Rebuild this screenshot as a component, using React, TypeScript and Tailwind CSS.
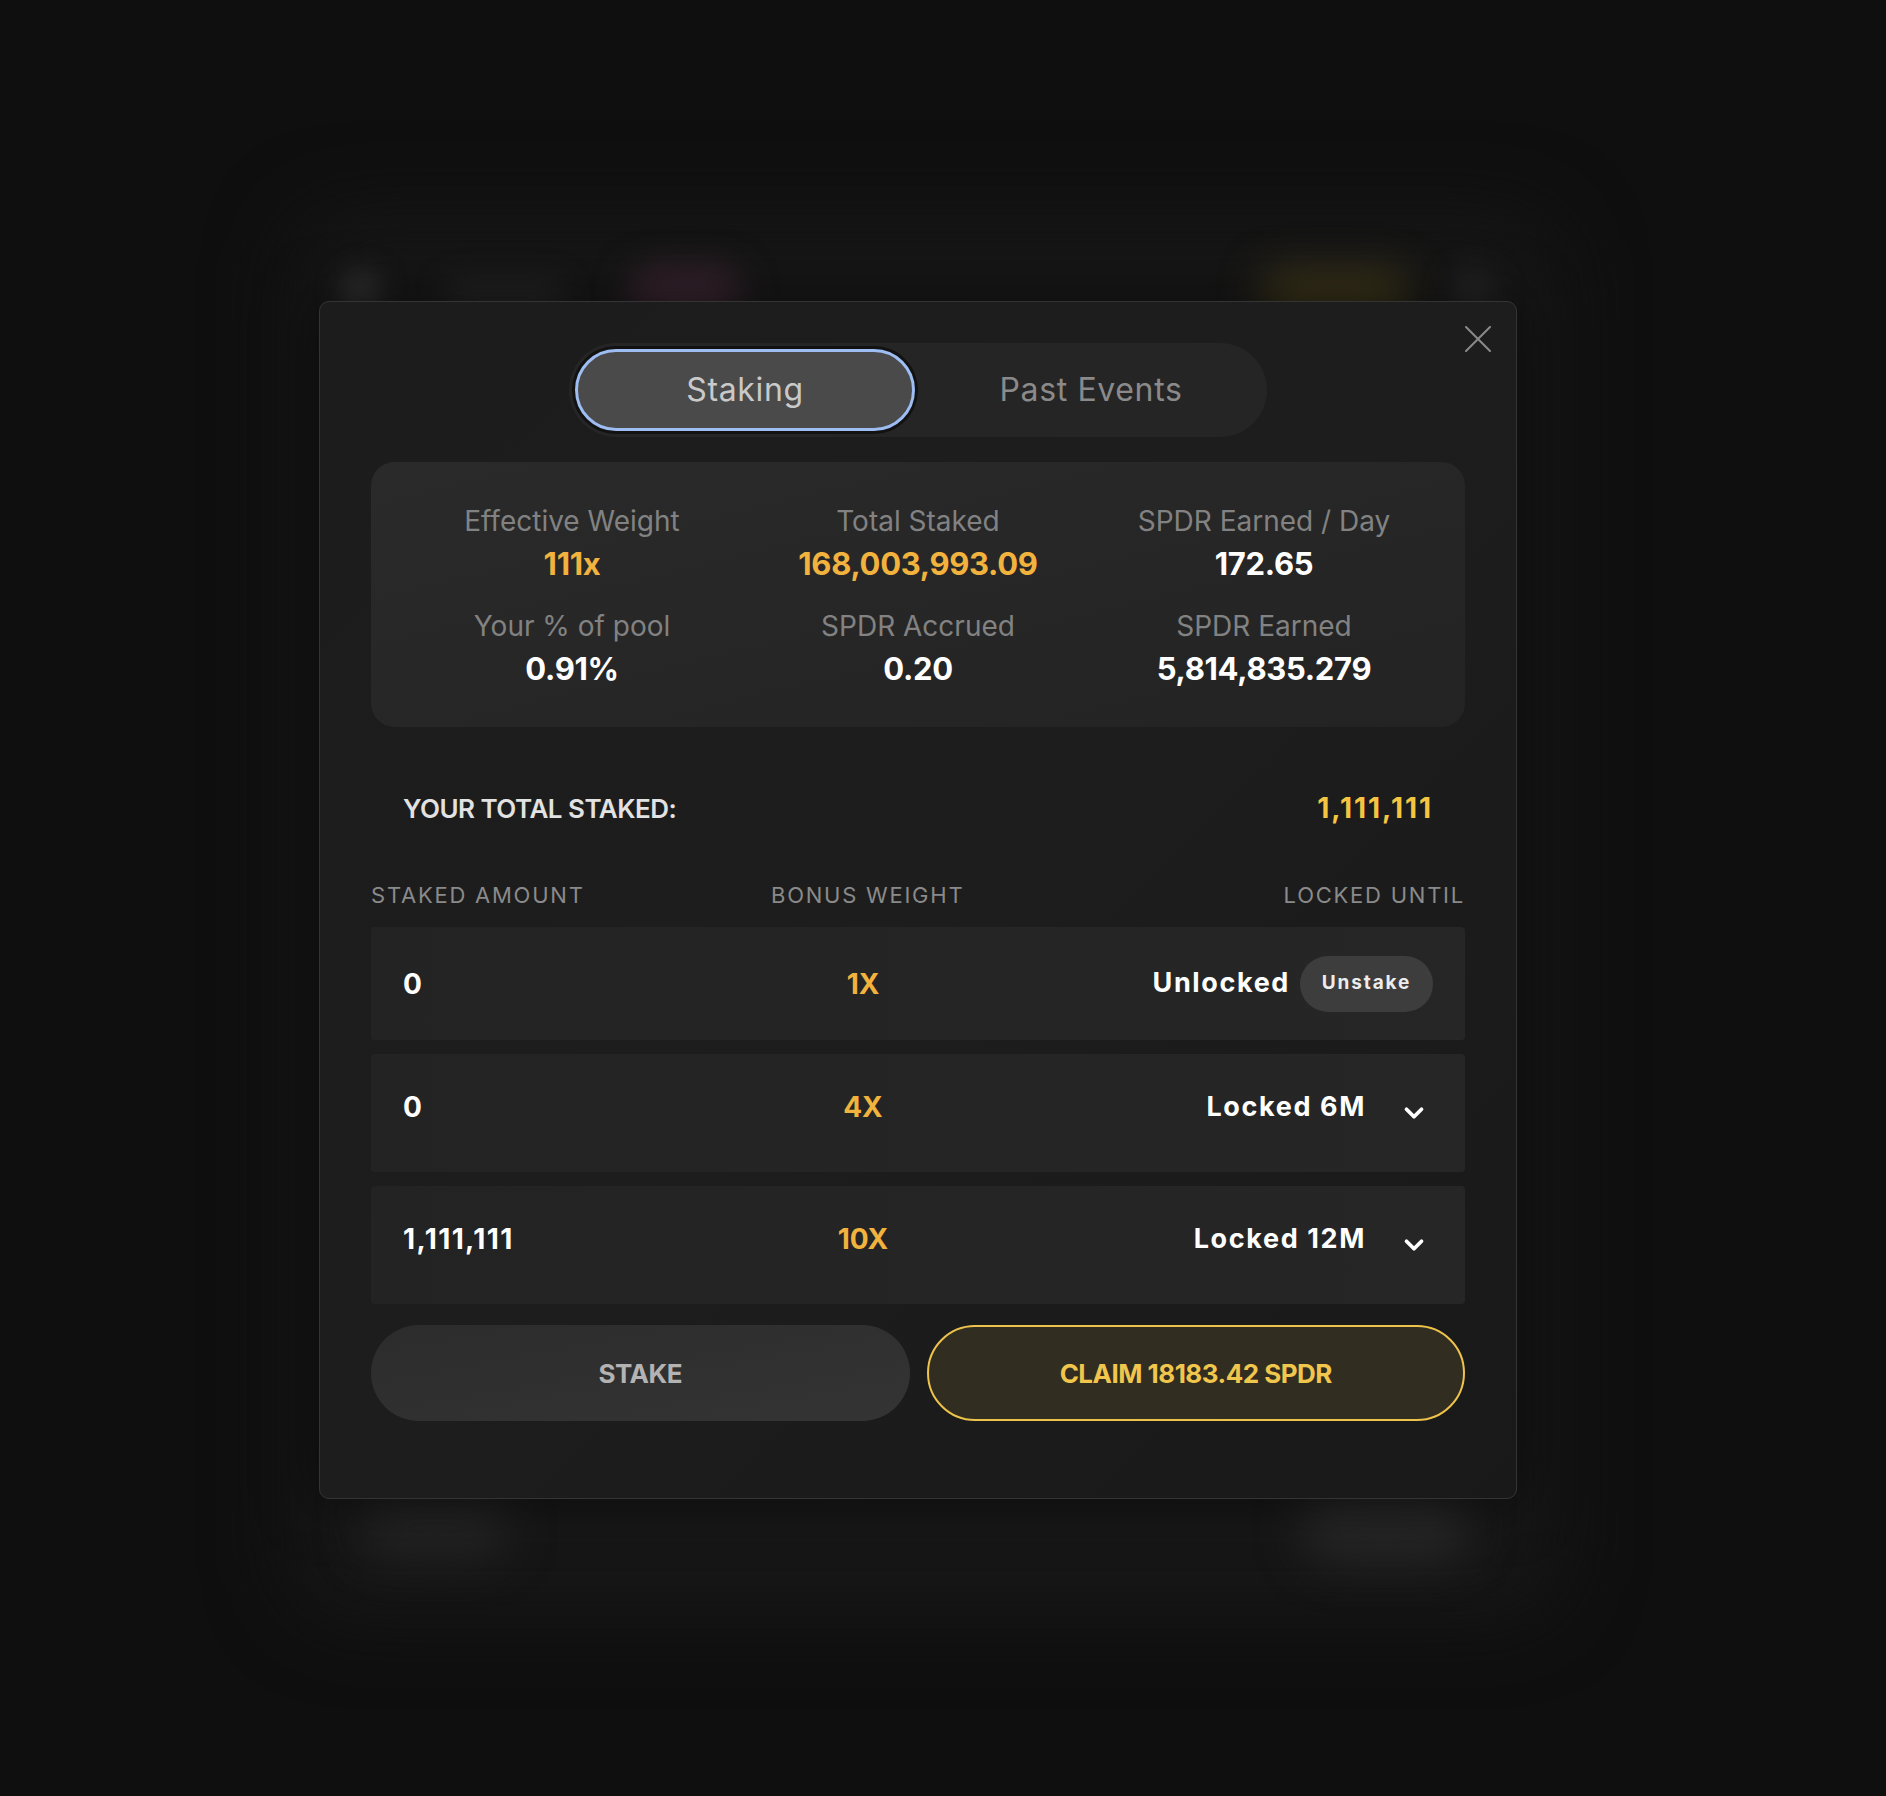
import { ChevronDown } from 'lucide-react'

const font = { fontFamily: 'Inter, "Noto Sans", sans-serif' }

const stats = [
  { label: 'Effective Weight', value: '111x', accent: true },
  { label: 'Total Staked', value: '168,003,993.09', accent: true },
  { label: 'SPDR Earned / Day', value: '172.65', accent: false },
  { label: 'Your % of pool', value: '0.91%', accent: false },
  { label: 'SPDR Accrued', value: '0.20', accent: false },
  { label: 'SPDR Earned', value: '5,814,835.279', accent: false },
]

const stakes = [
  { amount: '0', weight: '1X', status: 'Unlocked', unlocked: true },
  { amount: '0', weight: '4X', status: 'Locked 6M', unlocked: false },
  { amount: '1,111,111', weight: '10X', status: 'Locked 12M', unlocked: false },
]

function CloseIcon() {
  return (
    <svg width="26" height="26" viewBox="0 0 26 26" fill="none" stroke="#8a8a8a" strokeWidth="2" strokeLinecap="round">
      <path d="M1 1L25 25M25 1L1 25" />
    </svg>
  )
}

export default function App() {
  return (
    <div className="relative min-h-[1796px] w-full overflow-hidden bg-[#0f0f0f]" style={font}>
      {/* blurred page behind the modal */}
      <div className="absolute left-[290px] top-[215px] h-[1400px] w-[1270px] rounded-[60px] bg-[#171717] blur-[40px]" />
      <div className="absolute left-[340px] top-[270px] h-[42px] w-[42px] rounded-full bg-[#2c2c2c] blur-[12px]" />
      <div className="absolute left-[445px] top-[280px] h-[34px] w-[120px] rounded-full bg-[#222] blur-[14px]" />
      <div className="absolute left-[630px] top-[270px] h-[46px] w-[110px] rounded-full bg-[#3a2430] blur-[18px]" />
      <div className="absolute left-[1260px] top-[270px] h-[50px] w-[150px] rounded-full bg-[#3a3318] blur-[20px]" />
      <div className="absolute left-[1450px] top-[270px] h-[46px] w-[46px] rounded-full bg-[#242424] blur-[14px]" />
      <div className="absolute left-[360px] top-[1498px] h-[60px] w-[150px] rounded-full bg-[#232323] blur-[22px]" />
      <div className="absolute left-[1300px] top-[1493px] h-[70px] w-[170px] rounded-full bg-[#262626] blur-[22px]" />

      <div className="relative pl-[319px] pt-[301px]">
        <div className="relative w-[1198px] rounded-[10px] border border-[#343434] bg-gradient-to-br from-[#1c1c1c] via-[#1d1d1d] to-[#191919] px-[51px] pb-[77px] pt-[41px] shadow-[0_0_60px_rgba(0,0,0,0.5)]">
          <button className="absolute right-[25px] top-[24px]">
            <CloseIcon />
          </button>

          {/* tabs */}
          <div className="mx-auto flex h-[94px] w-[698px] gap-[6px] rounded-full bg-[#252525] p-[6px]">
            <div className="flex w-[340px] items-center justify-center rounded-full border-[3px] border-[#9dbdf3] bg-[#4a4a4a] text-[32px] tracking-[0.02em] text-[#c9c9c9] shadow-[0_0_0_3px_#121212]">
              Staking
            </div>
            <div className="flex w-[340px] items-center justify-center rounded-full text-[32px] tracking-[0.02em] text-[#8a8a8a]">
              Past Events
            </div>
          </div>

          {/* stats */}
          <div className="mt-[25px] grid h-[265px] grid-cols-3 gap-y-[27px] rounded-[24px] bg-gradient-to-br from-[#2a2a2a] to-[#232323] px-[28px] pb-[40px] pt-[43px]">
            {stats.map((s) => (
              <div key={s.label} className="flex flex-col items-center gap-[9px]">
                <div className="text-[28px] leading-[32px] text-[#828282]">{s.label}</div>
                <div
                  className={`text-[31px] font-bold leading-[36px] tracking-[-0.01em] ${
                    s.accent ? 'text-[#f2b23e]' : 'text-white'
                  }`}
                >
                  {s.value}
                </div>
              </div>
            ))}
          </div>

          {/* total */}
          <div className="mt-[56px] flex h-[50px] items-center justify-between px-[32px]">
            <span className="text-[26px] font-semibold tracking-[-0.02em] text-[#e2e2e2]">YOUR TOTAL STAKED:</span>
            <span className="text-[28px] font-bold tracking-[0.07em] text-[#f5c542]">1,111,111</span>
          </div>

          {/* table header */}
          <div className="mt-[46px] grid h-[26px] grid-cols-[400px_auto_1fr] items-center text-[22px] tracking-[0.08em] text-[#8a8a8a]">
            <span>STAKED AMOUNT</span>
            <span>BONUS WEIGHT</span>
            <span className="text-right">LOCKED UNTIL</span>
          </div>

          {/* rows */}
          <div className="mt-[22px] flex flex-col gap-[14px]">
            {stakes.map((r) => (
              <div
                key={r.weight}
                className={`grid grid-cols-[410px_100px_1fr] items-center rounded-[4px] bg-gradient-to-r from-[#232323] to-[#262626] pl-[32px] ${
                  r.unlocked ? 'h-[113px] pr-[32px]' : 'h-[118px] pb-[12px] pr-[36px]'
                }`}
              >
                <span className="text-[28px] font-bold tracking-[0.05em] text-white">{r.amount}</span>
                <span className="text-center text-[28px] font-bold text-[#f2b23e]">{r.weight}</span>
                <div className="flex items-center justify-end">
                  <span className="text-[27px] font-bold tracking-[0.06em] text-white">{r.status}</span>
                  {r.unlocked ? (
                    <span className="ml-[10px] flex h-[56px] w-[133px] items-center justify-center rounded-full bg-[#3d3d3d] text-[19px] font-bold tracking-[0.1em] text-[#ececec]">
                      Unstake
                    </span>
                  ) : (
                    <ChevronDown className="ml-[33px] mt-[12px]" size={30} color="#ffffff" strokeWidth={3} />
                  )}
                </div>
              </div>
            ))}
          </div>

          {/* actions */}
          <div className="mt-[21px] grid grid-cols-2 gap-[17px]">
            <button className="flex h-[96px] items-center justify-center rounded-full bg-gradient-to-br from-[#2c2c2c] to-[#343434] text-[26px] font-bold tracking-[-0.02em] text-[#b3b3b3]">
              STAKE
            </button>
            <button className="flex h-[96px] items-center justify-center rounded-full border-2 border-[#eec34c] bg-[#322d21] text-[26px] font-bold tracking-[-0.02em] text-[#f0c64c]">
              CLAIM 18183.42 SPDR
            </button>
          </div>
        </div>
      </div>
    </div>
  )
}
